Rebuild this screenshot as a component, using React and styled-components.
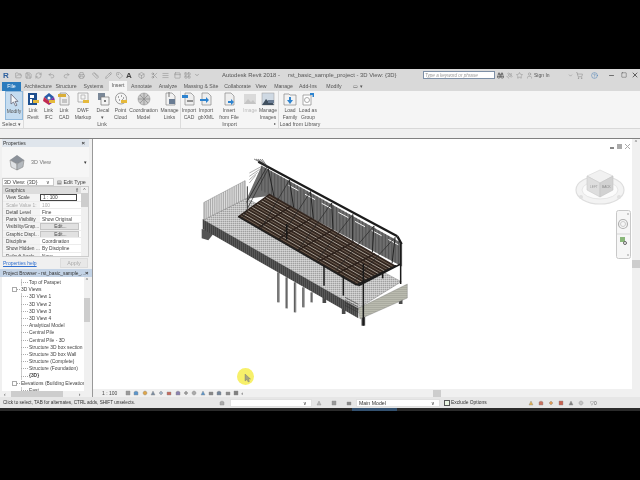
import React from 'react';
import styled, { createGlobalStyle } from 'styled-components';
import { FolderOpen, Save, RefreshCw, Undo2, Redo2, Printer, Star, User, ShoppingCart, Minus, Square, X, Binoculars, Satellite, ChevronDown, Ruler, Pencil, Tag, CircleHelp, Box, Scissors, AlignJustify, PanelTop, LayoutGrid } from 'lucide-react';

const GlobalStyle = createGlobalStyle`
  html, body { margin: 0; padding: 0; background: #000; }
  body { width: 640px; height: 480px; overflow: hidden; font-family: "Liberation Sans", Arial, sans-serif; }
`;

const Page = styled.div`
  width: 640px;
  height: 480px;
  padding-top: 69px;
  box-sizing: border-box;
  background: #000;
`;

const Window = styled.div`
  width: 640px;
  height: 342px;
  display: flex;
  flex-direction: column;
  background: #f0f0f0;
  color: #444;
  font-size: 5.4px;
  filter: blur(0.3px);
`;

const TitleBar = styled.div`
  height: 12px;
  display: flex;
  align-items: center;
  background: #d9d9d9;
  flex: none;
`;

const QatSlot = styled.div`
  width: ${({ $w }) => $w}px;
  flex: none;
  display: flex;
  justify-content: center;
  align-items: center;
  color: ${({ $color }) => $color || '#777'};
  font-size: 8px;
  font-weight: bold;
`;

const AppTitle = styled.div`
  margin-left: 20px;
  width: 199px;
  font-size: 5.9px;
  color: #555;
  white-space: nowrap;
  display: flex;
  gap: 8px;
`;

const SearchBox = styled.div`
  margin-left: 2px;
  width: 72px;
  height: 8px;
  line-height: 7px;
  border: 1px solid #7d8fa6;
  background: #fff;
  color: #999;
  font-size: 4.6px;
  font-style: italic;
  padding-left: 1px;
  box-sizing: border-box;
  flex: none;
  white-space: nowrap;
  overflow: hidden;
`;

const SignIn = styled.span`
  width: 32px;
  flex: none;
  font-size: 5px;
  color: #555;
`;

const Tabs = styled.div`
  height: 10px;
  flex: none;
  display: flex;
  align-items: flex-end;
  padding-left: 2px;
  background: #d9d9d9;
`;

const Tab = styled.div`
  width: ${({ $w }) => $w}px;
  flex: none;
  height: ${({ $active }) => ($active ? 10 : 9)}px;
  line-height: 9px;
  text-align: center;
  font-size: 5.2px;
  white-space: nowrap;
  color: ${({ $file }) => ($file ? '#fff' : '#555')};
  background: ${({ $file, $active }) => ($file ? '#2b7bbd' : $active ? '#f5f5f5' : 'transparent')};
`;

const Ribbon = styled.div`
  height: 38px;
  flex: none;
  display: flex;
  background: #f5f5f5;
  border-bottom: 1px solid #d8d8d8;
  box-sizing: border-box;
`;

const Panel = styled.div`
  width: ${({ $w }) => $w}px;
  flex: none;
  display: flex;
  flex-direction: column;
  border-right: 1px solid ${({ $plain }) => ($plain ? 'transparent' : '#dcdcdc')};
  box-sizing: border-box;
`;

const PanelTools = styled.div`
  height: 30px;
  display: flex;
  padding-left: ${({ $pad }) => $pad}px;
`;

const PanelName = styled.div`
  position: relative;
  height: 8px;
  line-height: 8px;
  text-align: center;
  font-size: 5.2px;
  color: #555;
  white-space: nowrap;
  &::after {
    content: ${({ $more }) => ($more ? "'▸'" : 'none')};
    position: absolute;
    right: 2px;
    top: 0;
    font-size: 4px;
  }
`;

const Tool = styled.div`
  width: ${({ $w }) => $w}px;
  flex: none;
  display: flex;
  flex-direction: column;
  align-items: center;
  padding-top: 1px;
  box-sizing: border-box;
  line-height: 6.5px;
  font-size: 5px;
  text-align: center;
  white-space: pre;
  color: ${({ $off }) => ($off ? '#bbb' : '#555')};
  background: ${({ $on }) => ($on ? '#c5dcf0' : 'transparent')};
  border: ${({ $on }) => ($on ? '1px solid #8fb8dc' : 'none')};
  svg { flex: none; margin-bottom: 1px; }
`;

const SubBar = styled.div`
  height: 9px;
  flex: none;
  background: #f0f0f0;
  border-bottom: 1px solid #808080;
`;

const Body = styled.div`
  flex: 1;
  min-height: 0;
  display: flex;
`;

const Side = styled.div`
  width: 92px;
  flex: none;
  display: flex;
  flex-direction: column;
  background: #f0f0f0;
`;

const PaneHeader = styled.div`
  height: 8px;
  flex: none;
  display: flex;
  align-items: center;
  justify-content: space-between;
  padding: 0 4px 0 ${({ $blue }) => ($blue ? 3 : 1)}px;
  background: ${({ $blue }) => ($blue ? '#c3d3e6' : '#dfe5ec')};
  font-size: ${({ $blue }) => ($blue ? 4.8 : 5)}px;
  color: #333;
  white-space: nowrap;
  b { font-size: 6px; }
`;

const Properties = styled.div`
  height: 130px;
  flex: none;
  display: flex;
  flex-direction: column;
  margin: 0 3px 0 2px;
`;

const TypePreview = styled.div`
  height: 30px;
  flex: none;
  display: flex;
  align-items: center;
  gap: 6px;
  padding: 0 2px 0 7px;
  background: #f6f6f6;
  color: #777;
  white-space: nowrap;
  span:last-child { margin-left: auto; color: #333; font-size: 5px; }
`;

const TypeRow = styled.div`
  height: 9px;
  flex: none;
  display: flex;
  align-items: center;
  gap: 3px;
  white-space: nowrap;
`;

const TypeSelect = styled.div`
  width: 52px;
  height: 8px;
  line-height: 7px;
  padding: 0 3px 0 1px;
  box-sizing: border-box;
  background: #fff;
  border: 1px solid #ccc;
  display: flex;
  justify-content: space-between;
`;

const Grid = styled.div`
  height: 71px;
  flex: none;
  display: flex;
  background: #fff;
  border: 1px solid #ccc;
  box-sizing: border-box;
  overflow: hidden;
`;

const GridRows = styled.div`
  flex: 1;
  min-width: 0;
`;

const GroupRow = styled.div`
  height: 7.3px;
  line-height: 7px;
  background: #dcdcdc;
  padding: 0 2px;
  font-size: 5px;
  display: flex;
  justify-content: space-between;
`;

const PropRow = styled.div`
  height: 7.3px;
  line-height: 7px;
  display: grid;
  grid-template-columns: 37px 1fr;
  border-bottom: 1px solid #ececec;
  box-sizing: border-box;
  font-size: 4.8px;
  white-space: nowrap;
  overflow: hidden;
  color: ${({ $dim }) => ($dim ? '#aaa' : '#444')};
  > div:first-child { padding-left: 3px; background: #f3f3f3; }
  > div:last-child { padding-left: 2px; }
`;

const ScaleValue = styled.div`
  && {
    padding-left: 1px;
    height: 6.5px;
    line-height: 5.5px;
    border: 1px solid #444;
    box-sizing: border-box;
    margin-right: 4px;
  }
`;

const EditButton = styled.div`
  && {
    text-align: center;
    background: #e1e1e1;
    border: 1px solid #c4c4c4;
    box-sizing: border-box;
    line-height: 5px;
    margin-right: 2px;
  }
`;

const VScroll = styled.div`
  width: ${({ $w }) => $w || 7}px;
  flex: none;
  display: flex;
  flex-direction: column;
  align-items: center;
  background: #f0f0f0;
  color: #555;
  font-size: 5px;
`;

const Thumb = styled.div`
  width: 100%;
  height: ${({ $h }) => $h}px;
  margin-top: ${({ $top }) => $top}px;
  background: #cdcdcd;
  flex: none;
`;

const HelpRow = styled.div`
  height: 12px;
  flex: none;
  display: flex;
  align-items: center;
  justify-content: space-between;
  padding: 0 1px;
  a { color: #2f6fd0; text-decoration: underline; font-size: 5px; }
`;

const ApplyButton = styled.div`
  width: 28px;
  height: 10px;
  line-height: 9px;
  text-align: center;
  color: #aaa;
  background: #e8e8e8;
  border: 1px solid #dcdcdc;
  box-sizing: border-box;
`;

const Browser = styled.div`
  flex: 1;
  min-height: 0;
  display: flex;
  flex-direction: column;
`;

const TreeArea = styled.div`
  flex: 1;
  min-height: 0;
  display: flex;
  margin: 0 2px;
  background: #fff;
  overflow: hidden;
`;

const Tree = styled.div`
  flex: 1;
  min-width: 0;
  padding-top: 2px;
  overflow: hidden;
`;

const TreeRow = styled.div`
  height: 7.2px;
  line-height: 7.2px;
  white-space: nowrap;
  overflow: hidden;
  display: flex;
  align-items: center;
  padding-left: ${({ $level }) => ($level === 2 ? 19 : 10)}px;
  font-size: 4.9px;
  font-weight: ${({ $bold }) => ($bold ? 'bold' : 'normal')};
  color: #444;
  background: ${({ $level }) => ($level === 2 ? 'linear-gradient(#ccc, #ccc) no-repeat 19px 0 / 1px 100%' : 'none')};
  &::before {
    content: '';
    width: ${({ $level }) => ($level === 2 ? 7 : 3)}px;
    margin-right: 1px;
    border-top: 1px dotted #aaa;
    flex: none;
  }
`;

const Expander = styled.span`
  order: -1;
  width: 5px;
  height: 5px;
  border: 1px solid #aaa;
  background: #fff;
  box-sizing: border-box;
  flex: none;
`;

const HScrollRow = styled.div`
  height: 6px;
  flex: none;
  margin: 0 2px;
  display: flex;
  align-items: center;
  padding-left: 2px;
  background: #f0f0f0;
  font-size: 5px;
`;

const HThumb = styled.div`
  width: 52px;
  height: 6px;
  background: #cdcdcd;
  margin: 0 16px 0 5px;
`;

const Main = styled.div`
  flex: 1;
  min-width: 0;
  display: flex;
  flex-direction: column;
`;

const CanvasRow = styled.div`
  flex: 1;
  min-height: 0;
  display: flex;
`;

const Canvas = styled.div`
  position: relative;
  flex: 1;
  background: #fff;
  border-left: 1px solid #999;
  overflow: hidden;
`;

const Floating = styled.div`
  position: absolute;
  left: ${({ $x }) => $x}px;
  top: ${({ $y }) => $y}px;
`;

const CursorHalo = styled.div`
  position: absolute;
  left: 144px;
  top: 229px;
  width: 17px;
  height: 17px;
  border-radius: 50%;
  background: #f7f06a;
`;

const ViewBar = styled.div`
  height: 8px;
  flex: none;
  display: flex;
  align-items: center;
  background: #f0f0f0;
  padding-left: 9px;
  border-left: 1px solid #999;
`;

const ViewScale = styled.span`
  width: 23px;
  flex: none;
  font-size: 5px;
`;

const ViewIcons = styled.div`
  width: 308px;
  flex: none;
  display: flex;
  align-items: center;
  gap: 2.3px;
  font-size: 6px;
`;

const ViewScrollThumb = styled.div`
  width: 8px;
  height: 7px;
  background: #cdcdcd;
  flex: none;
`;

const StatusBar = styled.div`
  height: 11px;
  flex: none;
  display: flex;
  align-items: center;
  background: #e6e6e6;
  font-size: 4.9px;
  color: #333;
`;

const StatusText = styled.div`
  width: 219px;
  padding-left: 3px;
  box-sizing: border-box;
  flex: none;
  font-size: 4.65px;
  white-space: nowrap;
`;

const StatusField = styled.div`
  width: ${({ $w }) => $w}px;
  height: 8px;
  line-height: 7px;
  padding: 0 4px 0 2px;
  box-sizing: border-box;
  flex: none;
  font-size: 5.2px;
  background: #fff;
  border: 1px solid #e0e0e0;
  display: flex;
  justify-content: space-between;
`;

const StatusGroup = styled.div`
  width: ${({ $w }) => $w}px;
  flex: none;
  padding-left: ${({ $pad }) => $pad || 0}px;
  box-sizing: border-box;
  display: flex;
  align-items: center;
  justify-content: ${({ $center }) => ($center ? 'space-around' : 'flex-start')};
  white-space: nowrap;
`;

const CheckBox = styled.span`
  width: 6px;
  height: 6px;
  margin-right: 1px;
  border: 1px solid #555;
  background: #e8f3e0;
  box-sizing: border-box;
  flex: none;
`;

const FilterCount = styled.span`
  margin-left: 4px;
  color: #666;
`;

const BottomStrip = styled.div`
  height: 3px;
  flex: none;
  background: linear-gradient(90deg, #2a2a2a 0 55%, #33506e 55% 62%, #2a2a2a 62% 100%);
`;

const ico = (children) => (
  <svg width="14" height="14" viewBox="0 0 14 14" fill="none">{children}</svg>
);

const Sheet = ({ c = '#eee' }) => <path d="M3 1h6l3 3v9H3z" fill={c} stroke="#888" strokeWidth=".7" />;
const Tagline = ({ c = '#e5b93c' }) => <rect x="7" y="8" width="6" height="3" fill={c} />;

const toolIcons = {
  modify: ico(<path d="M4 1v10l2.5-2 2 4 1.5-.8-2-3.8H11z" fill="#f4f7fa" stroke="#667" strokeWidth=".8" />),
  revit: ico(<><path d="M2 1h9v12H2z" fill="#1e4f8f" /><path d="M4 3h4v3H4zM4 7h2v4H4z" fill="#fff" /><Tagline /></>),
  ifc: ico(<><path d="M7 1l5 4-5 4-5-4z" fill="#2a5da8" /><path d="M2 5l5 4v4L1 9z" fill="#c02a52" /><path d="M12 5L7 9v4l6-4z" fill="#7a2fa0" /><circle cx="7" cy="6" r="1.5" fill="#fff" /><Tagline /></>),
  cad: ico(<><Sheet /><path d="M1 2h8v3H1z" fill="#d9ae38" /><path d="M5 8h5M5 10h5" stroke="#777" strokeWidth=".7" /></>),
  dwf: ico(<><path d="M2 1h10v9H2z" fill="#f5f5f5" stroke="#999" strokeWidth=".7" /><path d="M5 3h4v4H5z" stroke="#aaa" strokeWidth=".7" /><Tagline /></>),
  decal: ico(<><path d="M2 1h7v7H2z" fill="#7b8898" /><path d="M5 5h8v8H5z" fill="#f4f4f4" stroke="#777" strokeWidth=".7" /><circle cx="9" cy="9" r="1" fill="#555" /></>),
  cloud: ico(<><circle cx="7" cy="6.5" r="5.5" fill="#f5f5f5" stroke="#777" strokeWidth=".7" /><path d="M4 5h1M7 4h1M9 6h1M5 8h1M8 8h1" stroke="#555" /><Tagline /></>),
  coord: ico(<><circle cx="7" cy="7" r="6" fill="#c9c9c9" stroke="#999" strokeWidth=".6" /><path d="M1 7h12M7 1v12M3 3l8 8M11 3l-8 8" stroke="#888" strokeWidth=".7" /></>),
  links: ico(<><Sheet c="#f2f2f2" /><path d="M6 0v5" stroke="#777" /><rect x="6" y="7" width="6" height="5" fill="#6a7c93" /></>),
  icad: ico(<><Sheet /><path d="M0 3h6v3H0z" fill="#2d83cf" /><path d="M5 9h6" stroke="#555" strokeWidth="1.2" /></>),
  igb: ico(<><Sheet /><path d="M1 7h6V5l3 3-3 3V9H1z" fill="#2d83cf" /></>),
  file: ico(<><Sheet /><path d="M6 9h3V7l3 3-3 3v-2H6z" fill="#2d83cf" /></>),
  image: ico(<><rect x="1" y="2" width="12" height="10" fill="#dadada" /><path d="M1 12l4-5 3 3 2-2 3 4z" fill="#c4c4c4" /></>),
  mimage: ico(<><rect x="1" y="1" width="12" height="12" fill="#cfd9e3" stroke="#999" strokeWidth=".5" /><path d="M1 13l4-6 3 3 2-2 3 5z" fill="#41505f" /><Tagline c="#6a7c93" /></>),
  family: ico(<><path d="M1 2h5l1 1h6v10H1z" fill="#f3f3f3" stroke="#888" strokeWidth=".7" /><path d="M6 5h2v3h2l-3 4-3-4h2z" fill="#2d83cf" /></>),
  group: ico(<><path d="M2 3h8v10H2z" fill="#fff" stroke="#888" strokeWidth=".7" /><circle cx="6" cy="8" r="2.5" stroke="#888" strokeWidth=".7" /><path d="M9 1h4v4h-1.5V3H9z" fill="#2d83cf" /></>),
};

const tabs = [
  ['File', 19, 'file'], ['', 3], ['Architecture', 28], ['Structure', 28], ['Systems', 27], ['', 2],
  ['Insert', 18, 'active'], ['Annotate', 29], ['Analyze', 24], ['Massing & Site', 42], ['Collaborate', 31],
  ['View', 16], ['Manage', 29], ['Add-Ins', 20], ['Modify', 32], ['▭ ▾', 16],
];

const panels = [
  { name: 'Select ▾', w: 24, pad: 5, tools: [['modify', 'Modify\n', 18, true]] },
  { name: 'Link', w: 157, pad: 1, tools: [
    ['revit', 'Link\nRevit', 16], ['ifc', 'Link\nIFC', 15], ['cad', 'Link\nCAD', 16], ['dwf', 'DWF\nMarkup', 22],
    ['decal', 'Decal\n▾', 18], ['cloud', 'Point\nCloud', 17], ['coord', 'Coordination\nModel', 29], ['links', 'Manage\nLinks', 23],
  ] },
  { name: 'Import', w: 98, pad: 0, more: true, tools: [
    ['icad', 'Import\nCAD', 16], ['igb', 'Import\ngbXML', 18], ['file', 'Insert\nfrom File', 28], ['image', 'Image\n', 14, false, true], ['mimage', 'Manage\nImages', 22],
  ] },
  { name: 'Load from Library', w: 43, pad: 2, plain: true, tools: [['family', 'Load\nFamily', 18], ['group', 'Load as\nGroup', 18]] },
];

const properties = [
  ['View Scale', '1 : 100', 'scale'], ['Scale Value    1:', '100', 'dim'], ['Detail Level', 'Fine'],
  ['Parts Visibility', 'Show Original'], ['Visibility/Grap...', 'Edit...', 'edit'], ['Graphic Displ...', 'Edit...', 'edit'],
  ['Discipline', 'Coordination'], ['Show Hidden ...', 'By Discipline'], ['Default Analy...', 'None'],
];

const treeRows = [
  ['Top of Parapet', 2], ['3D Views', 1, 'open'], ['3D View 1', 2], ['3D View 2', 2], ['3D View 3', 2], ['3D View 4', 2],
  ['Analytical Model', 2], ['Central Pile', 2], ['Central Pile - 3D', 2], ['Structure 3D box section', 2],
  ['Structure 3D box Wall', 2], ['Structure (Complete)', 2], ['Structure (Foundation)', 2], ['{3D}', 2, 'bold'],
  ['Elevations (Building Elevation', 1, 'open'], ['East', 2],
];

const miniShapes = [
  'M1 1h4v4H1z', 'M1 2l2-1 2 1v3H1z', 'M3 1a2 2 0 1 0 .01 0z', 'M1 5l2-4 2 4z', 'M1 3l2-2 2 2-2 2z', 'M1 5V2h4v3z',
];

const viewIcons = [
  ['#9a9a9a', 0], ['#5b96cc', 1], ['#dfa64a', 2], ['#7b8da2', 3], ['#9db0c2', 4], ['#c66a5e', 5], ['#8a82b0', 1],
  ['#9a9a9a', 4], ['#aaaaaa', 2], ['#5b96cc', 3], ['#888888', 5], ['#74859a', 1], ['#8c8c8c', 5], ['#808080', 0],
];

const statusIcons = [['#e0b050', 3], ['#c8705e', 1], ['#dd9a55', 4], ['#c8604f', 0], ['#808080', 3], ['#c4c4c4', 2]];

const lerp = (a, b, t) => [a[0] + (b[0] - a[0]) * t, a[1] + (b[1] - a[1]) * t];
const range = (n) => Array.from({ length: n }, (_, i) => i);

const Seg = ({ a, b, c = '#2b2b2b', w = 2 }) => (
  <line x1={a[0]} y1={a[1]} x2={b[0]} y2={b[1]} stroke={c} strokeWidth={w} />
);

// whole drawing uses the 3x coordinates of the zoomed reference
const Model = () => {
  const floorA = [145, 203], floorB = [240, 135], floorC = [618, 350], floorD = [500, 408];
  return (
    <svg width="230" height="180" viewBox="0 0 690 540">
      <defs>
        <pattern id="deck" width="6" height="6" patternUnits="userSpaceOnUse">
          <rect width="6" height="6" fill="#c6c6c6" />
          <path d="M0 1.5h6" stroke="#7e7e7e" strokeWidth="1.6" />
          <path d="M1.5 0v6" stroke="#ededed" strokeWidth="1.2" />
        </pattern>
        <pattern id="side" width="6" height="6" patternUnits="userSpaceOnUse">
          <rect width="6" height="6" fill="#bdbeb2" />
          <path d="M0 2h6" stroke="#8f9086" strokeWidth="1.5" />
        </pattern>
        <pattern id="front" width="6" height="6" patternUnits="userSpaceOnUse">
          <rect width="6" height="6" fill="#3c3c3c" />
          <path d="M2 0v6" stroke="#7c7c7c" strokeWidth="1.6" />
        </pattern>
      </defs>

      {[[265, 370, 460], [290, 385, 478], [315, 400, 490], [340, 415, 475], [365, 430, 460]].map(([x, y1, y2]) => (
        <g key={x}>
          <Seg a={[x, y1]} b={[x, y2]} c="#5e5e5e" w={7} />
          <Seg a={[x + 2, y1]} b={[x + 2, y2]} c="#b0b0b0" w={2} />
        </g>
      ))}
      {[[403, 440, 462], [461, 470, 495], [520, 500, 530], [632, 430, 465]].map(([x, y1, y2]) => (
        <Seg key={x} a={[x, y1]} b={[x, y2]} c="#4a4a4a" w={11} />
      ))}

      <path d="M35 240l40 8-20 26-20-6z" fill="#555" />
      <path d="M38 210L505 478v30L38 240z" fill="url(#front)" />
      <path d="M505 478L652 405v42L510 510z" fill="url(#side)" stroke="#666" />
      <path d="M40 212L170 148 634 398 505 478z" fill="url(#deck)" stroke="#555" />

      <path d="M42 160L165 95V150L42 212z" fill="#dcdcdc" stroke="#666" />
      {range(20).map((i) => {
        const t = i / 19;
        return <Seg key={i} a={lerp([42, 160], [165, 95], t)} b={lerp([42, 212], [165, 150], t)} c="#6f6f6f" w={1.4} />;
      })}

      <path d="M215 50L635 282V352L240 140 170 150z" fill="#6e6e6e" />
      {range(44).map((i) => {
        const t = i / 43;
        return <Seg key={i} a={lerp([215, 50], [635, 282], t)} b={lerp([215, 125], [635, 352], t)} c="#3a3a3a" w={1.6} />;
      })}
      {range(7).map((i) => {
        const t = (i + 0.5) / 7;
        const p = lerp([270, 95], [620, 285], t);
        return <Seg key={i} a={p} b={[p[0] + 30, p[1] + 16]} c="#f4f4f4" w={3} />;
      })}

      <path d={`M${floorA}L${floorB} ${floorC} ${floorD}z`} fill="#33261f" />
      {range(13).map((i) => {
        const t = 0.06 + i * 0.073;
        return (
          <Seg key={i} a={lerp(floorA, floorB, t)} b={lerp(floorD, floorC, t)} c={i % 2 ? '#c4bdb1' : '#7f6f60'} w={2.4} />
        );
      })}
      {range(7).map((i) => {
        const t = i / 6;
        return <Seg key={i} a={lerp(floorA, floorD, t)} b={lerp(floorB, floorC, t)} c="#2a1f1a" w={3.5} />;
      })}
      <Seg a={floorA} b={floorD} c="#1f1f1f" w={4.5} />
      <Seg a={floorD} b={floorC} c="#1f1f1f" w={4.5} />

      {range(7).map((i) => {
        const t = (i + 0.2) / 6.4;
        const top = lerp([222, 52], [628, 272], t);
        const low = lerp(floorB, floorC, t);
        const front = lerp(floorA, floorD, t);
        return (
          <g key={i}>
            <Seg a={top} b={low} c="#242424" w={3} />
            <Seg a={top} b={front} c="#242424" w={2} />
          </g>
        );
      })}

      {[[402, 350, 410], [460, 380, 440], [520, 345, 530], [632, 285, 405], [578, 375, 388], [290, 225, 272]].map(([x, y1, y2]) => (
        <Seg key={x} a={[x, y1]} b={[x, y2]} c="#1a1a1a" w={4.5} />
      ))}
      <Seg a={[505, 410]} b={[632, 345]} c="#1a1a1a" w={5} />
      <Seg a={[170, 160]} b={[230, 55]} c="#333" w={3} />
      <Seg a={[172, 112]} b={[172, 178]} c="#333" w={3} />
      <Seg a={[205, 38]} b={[622, 262]} c="#1c1c1c" w={7} />
      <Seg a={[622, 262]} b={[635, 285]} c="#1c1c1c" w={7} />
      {range(5).map((i) => (
        <Seg key={i} a={[192 + i * 6, 30]} b={[226 + i * 2, 48 + i * 2]} c="#333" w={1.8} />
      ))}
      {range(4).map((i) => (
        <Seg key={i} a={[178, 72 + i * 10]} b={[215 - i * 6, 52 + i * 9]} c="#555" w={1.4} />
      ))}
      {range(4).map((i) => (
        <Seg key={i} a={[465, 445 + i * 8]} b={[505, 466 + i * 8]} c="#333" w={1.8} />
      ))}
    </svg>
  );
};

const ViewCube = () => (
  <svg width="56" height="46" viewBox="0 0 56 46">
    <ellipse cx="28" cy="29" rx="24" ry="14" fill="#f3f3f3" stroke="#dedede" strokeWidth="1.2" />
    <ellipse cx="28" cy="29" rx="18" ry="9" fill="#fbfbfb" stroke="#e6e6e6" />
    <path d="M28 9l13 6-13 7-13-7z" fill="#f1f1f1" stroke="#d6d6d6" strokeWidth=".6" />
    <path d="M15 15l13 7v14l-13-7z" fill="#dedede" stroke="#cacaca" strokeWidth=".6" />
    <path d="M41 15l-13 7v14l13-7z" fill="#d2d2d2" stroke="#c2c2c2" strokeWidth=".6" />
    <text x="18" y="27" fontSize="3.2" fill="#999" fontFamily="Liberation Sans">LEFT</text>
    <text x="30" y="27" fontSize="3.2" fill="#888" fontFamily="Liberation Sans">BACK</text>
    <circle cx="9" cy="36" r="2" fill="#e0e0e0" />
    <circle cx="47" cy="36" r="2" fill="#e0e0e0" />
  </svg>
);

const NavBar = () => (
  <svg width="15" height="49" viewBox="0 0 15 49">
    <rect x=".5" y=".5" width="14" height="48" rx="2" fill="#f6f6f6" stroke="#c8c8c8" />
    <circle cx="7" cy="14" r="4.5" fill="none" stroke="#b0b0b0" strokeWidth="1.2" />
    <circle cx="7" cy="14" r="2.5" fill="none" stroke="#ccc" />
    <path d="M1 24h13" stroke="#d6d6d6" />
    <rect x="4" y="27" width="5" height="5" fill="#8ab77a" />
    <circle cx="9" cy="33" r="1.5" fill="none" stroke="#666" />
    <circle cx="12" cy="4" r="1" fill="#bbb" />
    <circle cx="12" cy="45" r="1" fill="#bbb" />
  </svg>
);

const ViewControls = () => (
  <svg width="22" height="7" viewBox="0 0 22 7">
    <path d="M0 4h4v2H0z" fill="#888" />
    <rect x="7" y="1" width="5" height="5" fill="#aaa" />
    <path d="M15 1l5 5M20 1l-5 5" stroke="#aaa" />
  </svg>
);

const MouseArrow = () => (
  <svg width="7" height="9" viewBox="0 0 7 9">
    <path d="M1 0v7l2-1.5L4.2 8l1.3-.6L4.3 5H6.5z" fill="#a5a580" stroke="#777" strokeWidth=".4" />
  </svg>
);

const MiniIcon = ({ c, s = 0 }) => (
  <svg width="6" height="6" viewBox="0 0 6 6">
    <path d={miniShapes[s]} fill={c} stroke="#8a8a8a" strokeWidth=".4" />
  </svg>
);

const House = () => (
  <svg width="16" height="17" viewBox="0 0 16 17">
    <path d="M8 1l7 5-7 4-7-4z" fill="#8b9199" />
    <path d="M1 6l7 4v6l-6-3z" fill="#dfe2e5" stroke="#777" strokeWidth=".5" />
    <path d="M15 6l-7 4v6l6-3z" fill="#b4b9be" stroke="#777" strokeWidth=".5" />
  </svg>
);

const App = () => (
  <Page>
    <GlobalStyle />
    <Window>
      <TitleBar>
        <QatSlot $w={12} $color="#2c5f9e">R</QatSlot>
        {[[FolderOpen, 12], [Save, 9], [RefreshCw, 11], [Undo2, 14], [Redo2, 16], [Printer, 15], [Ruler, 13], [Pencil, 12], [Tag, 10]].map(([Icon, w], i) => (
          <QatSlot key={i} $w={w}><Icon size={7} strokeWidth={1.4} /></QatSlot>
        ))}
        <QatSlot $w={10} $color="#444">A</QatSlot>
        {[[Box, 15], [Scissors, 10], [AlignJustify, 12], [PanelTop, 12], [LayoutGrid, 9]].map(([Icon, w], i) => (
          <QatSlot key={i} $w={w}><Icon size={7} strokeWidth={1.4} /></QatSlot>
        ))}
        <QatSlot $w={10}><ChevronDown size={6} /></QatSlot>
        <AppTitle>
          <span>Autodesk Revit 2018 -</span>
          <span>rst_basic_sample_project - 3D View: {'{3D}'}</span>
        </AppTitle>
        <SearchBox>Type a keyword or phrase</SearchBox>
        <QatSlot $w={10} $color="#444"><Binoculars size={7} /></QatSlot>
        <QatSlot $w={9}><Satellite size={7} strokeWidth={1.3} /></QatSlot>
        <QatSlot $w={10}><Star size={7} strokeWidth={1.3} /></QatSlot>
        <QatSlot $w={10}><User size={7} strokeWidth={1.3} /></QatSlot>
        <SignIn>Sign In</SignIn>
        <QatSlot $w={8}><ChevronDown size={5} /></QatSlot>
        <QatSlot $w={10}><ShoppingCart size={7} strokeWidth={1.4} /></QatSlot>
        <QatSlot $w={20} $color="#2b6cb0"><CircleHelp size={7} strokeWidth={1.4} /></QatSlot>
        <QatSlot $w={14} $color="#222"><Minus size={7} strokeWidth={2} /></QatSlot>
        <QatSlot $w={11} $color="#222"><Square size={6} strokeWidth={1.4} /></QatSlot>
        <QatSlot $w={11} $color="#222"><X size={8} strokeWidth={2} /></QatSlot>
      </TitleBar>

      <Tabs>
        {tabs.map(([label, w, kind], i) => (
          <Tab key={i} $w={w} $file={kind === 'file'} $active={kind === 'active'}>{label}</Tab>
        ))}
      </Tabs>

      <Ribbon>
        {panels.map((panel) => (
          <Panel key={panel.name} $w={panel.w} $plain={panel.plain}>
            <PanelTools $pad={panel.pad}>
              {panel.tools.map(([icon, label, w, on, off]) => (
                <Tool key={icon} $w={w} $on={on} $off={off}>
                  {toolIcons[icon]}
                  {label}
                </Tool>
              ))}
            </PanelTools>
            <PanelName $more={panel.more}>{panel.name}</PanelName>
          </Panel>
        ))}
      </Ribbon>
      <SubBar />

      <Body>
        <Side>
          <Properties>
            <PaneHeader>Properties<b>×</b></PaneHeader>
            <TypePreview>
              <House />
              <span>3D View</span>
              <span>▾</span>
            </TypePreview>
            <TypeRow>
              <TypeSelect><span>3D View: {'{3D}'}</span><span>∨</span></TypeSelect>
              <span>▤ Edit Type</span>
            </TypeRow>
            <Grid>
              <GridRows>
                <GroupRow><span>Graphics</span><span>⇑</span></GroupRow>
                {properties.map(([name, value, kind]) => (
                  <PropRow key={name} $dim={kind === 'dim'}>
                    <div>{name}</div>
                    {kind === 'scale' ? <ScaleValue>{value}</ScaleValue> : kind === 'edit' ? <EditButton>{value}</EditButton> : <div>{value}</div>}
                  </PropRow>
                ))}
              </GridRows>
              <VScroll>
                <span>^</span>
                <Thumb $h={14} $top={0} />
              </VScroll>
            </Grid>
            <HelpRow>
              <a>Properties help</a>
              <ApplyButton>Apply</ApplyButton>
            </HelpRow>
          </Properties>

          <Browser>
            <PaneHeader $blue>Project Browser - rst_basic_sample_...<b>×</b></PaneHeader>
            <TreeArea>
              <Tree>
                {treeRows.map(([label, level, kind]) => (
                  <TreeRow key={label} $level={level} $bold={kind === 'bold'}>
                    {kind === 'open' && <Expander />}
                    {label}
                  </TreeRow>
                ))}
              </Tree>
              <VScroll $w={6}>
                <span>^</span>
                <Thumb $h={24} $top={15} />
              </VScroll>
            </TreeArea>
            <HScrollRow>
              <span>‹</span>
              <HThumb />
              <span>›</span>
            </HScrollRow>
          </Browser>
        </Side>

        <Main>
          <CanvasRow>
            <Canvas>
              <Floating $x={97} $y={10}><Model /></Floating>
              <Floating $x={517} $y={4}><ViewControls /></Floating>
              <Floating $x={479} $y={22}><ViewCube /></Floating>
              <Floating $x={523} $y={71}><NavBar /></Floating>
              <CursorHalo />
              <Floating $x={151} $y={235}><MouseArrow /></Floating>
            </Canvas>
            <VScroll $w={8}>
              <span>^</span>
              <Thumb $h={8} $top={115} />
            </VScroll>
          </CanvasRow>
          <ViewBar>
            <ViewScale>1 : 100</ViewScale>
            <ViewIcons>
              {viewIcons.map(([c, s], i) => <MiniIcon key={i} c={c} s={s} />)}
              <span>‹</span>
            </ViewIcons>
            <ViewScrollThumb />
          </ViewBar>
        </Main>
      </Body>

      <StatusBar>
        <StatusText>Click to select, TAB for alternates, CTRL adds, SHIFT unselects.</StatusText>
        <StatusGroup $w={11}><MiniIcon c="#aaaaaa" s={1} /></StatusGroup>
        <StatusField $w={82}><span /><span>∨</span></StatusField>
        <StatusGroup $w={44} $center>
          <MiniIcon c="#bbbbbb" s={3} />
          <MiniIcon c="#999999" s={0} />
          <MiniIcon c="#888888" s={5} />
        </StatusGroup>
        <StatusField $w={84}><span>Main Model</span><span>∨</span></StatusField>
        <StatusGroup $w={86} $pad={4}><CheckBox />Exclude Options</StatusGroup>
        <StatusGroup $w={60} $center>
          {statusIcons.map(([c, s]) => <MiniIcon key={c} c={c} s={s} />)}
        </StatusGroup>
        <FilterCount>▽0</FilterCount>
      </StatusBar>
      <BottomStrip />
    </Window>
  </Page>
);

export default App;
